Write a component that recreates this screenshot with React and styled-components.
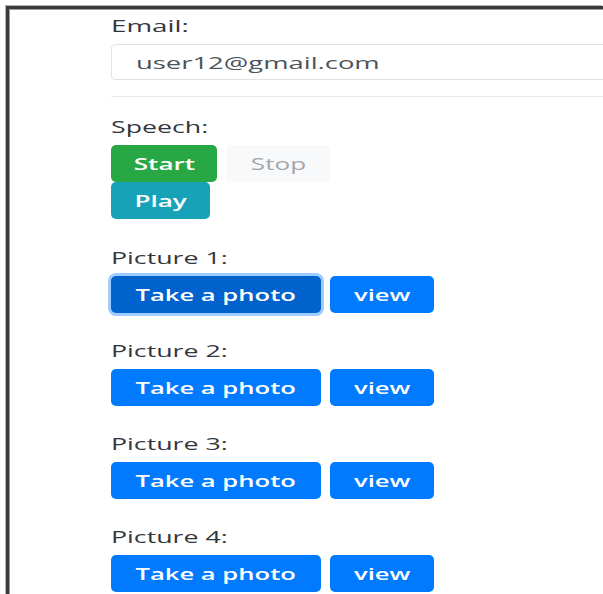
import React from 'react';
import styled, { createGlobalStyle } from 'styled-components';

const GlobalStyle = createGlobalStyle`
  html, body {
    margin: 0;
    padding: 0;
    background: #ffffff;
  }
  body {
    font-family: "Open Sans", "Liberation Sans", sans-serif;
    color: #212529;
    overflow: hidden;
  }
`;

const Frame = styled.div`
  margin: 6px 0 0 6px;
  min-height: 100vh;
  border-top: 3px solid #3b3b3b;
  border-left: 3px solid #3b3b3b;
  box-shadow: inset 1px 1px 0 #9a9a9a, -1px -1px 0 #b5b5b5;
  padding: 4px 0 0 102px;
  overflow: hidden;
`;

const Form = styled.div`
  width: 560px;
  display: flex;
  flex-direction: column;
`;

const Section = styled.div`
  margin-top: ${(p) => p.$gap || 0}px;
  display: flex;
  flex-direction: column;
`;

// text in this UI is drawn wide, so glyphs get a horizontal stretch
const Wide = styled.span`
  display: inline-block;
  transform: scaleX(${(p) => p.$scale || 1.58});
  transform-origin: ${(p) => (p.$center ? 'center' : 'left')};
  white-space: nowrap;
`;

const Label = styled.label`
  display: block;
  font-size: 16.5px;
  line-height: 25px;
  height: 25px;
  margin-bottom: 6px;
  color: #33373d;
`;

const Input = styled.div`
  height: 36px;
  box-sizing: border-box;
  border: 1px solid #dfe3e8;
  border-radius: 4px;
  padding-left: 24px;
  display: flex;
  align-items: center;
  font-size: 16.5px;
  color: #4d5359;
`;

const Divider = styled.hr`
  margin: 16px 0 0;
  border: 0;
  border-top: 1px solid #e8eaed;
  height: 0;
`;

const Row = styled.div`
  display: flex;
  flex-wrap: wrap;
  gap: 0 9px;
  width: ${(p) => p.$width || 'auto'};
`;

const tones = {
  primary: { bg: '#007bff', fg: '#ffffff', weight: 600 },
  active: { bg: '#0062cc', fg: '#ffffff', weight: 600 },
  success: { bg: '#28a745', fg: '#ffffff', weight: 600 },
  info: { bg: '#17a2b8', fg: '#ffffff', weight: 600 },
  light: { bg: '#f8f9fa', fg: '#a3a6aa', weight: 400 },
};

const Button = styled.button`
  width: ${(p) => p.$w}px;
  height: 37px;
  padding: 0;
  border: 0;
  border-radius: 5px;
  background: ${(p) => tones[p.$tone].bg};
  color: ${(p) => tones[p.$tone].fg};
  font-family: "Open Sans", "Liberation Sans", sans-serif;
  font-size: 16.5px;
  font-weight: ${(p) => tones[p.$tone].weight};
  display: flex;
  align-items: center;
  justify-content: center;
  box-shadow: ${(p) => (p.$tone === 'active' ? '0 0 0 3px rgba(38, 143, 255, 0.45)' : 'none')};
  cursor: pointer;
`;

const Picture = ({ n, active }) => (
  <Section $gap={n === 1 ? 26 : 25}>
    <Label>
      <Wide $scale={1.62}>Picture {n}:</Wide>
    </Label>
    <Row>
      <Button $w={210} $tone={active ? 'active' : 'primary'}>
        <Wide $center $scale={1.55}>Take a photo</Wide>
      </Button>
      <Button $w={104} $tone="primary">
        <Wide $center $scale={1.55}>view</Wide>
      </Button>
    </Row>
  </Section>
);

export default function App() {
  return (
    <>
      <GlobalStyle />
      <Frame>
        <Form>
          <Section>
            <Label>
              <Wide $scale={1.68}>Email:</Wide>
            </Label>
            <Input>
              <Wide $scale={1.66}>user12@gmail.com</Wide>
            </Input>
            <Divider />
          </Section>

          <Section $gap={17}>
            <Label>
              <Wide $scale={1.62}>Speech:</Wide>
            </Label>
            <Row $width="230px">
              <Button $w={106} $tone="success">
                <Wide $center>Start</Wide>
              </Button>
              <Button $w={104} $tone="light">
                <Wide $center>Stop</Wide>
              </Button>
              <Button $w={99} $tone="info">
                <Wide $center>Play</Wide>
              </Button>
            </Row>
          </Section>

          <Picture n={1} active />
          <Picture n={2} />
          <Picture n={3} />
          <Picture n={4} />
        </Form>
      </Frame>
    </>
  );
}
